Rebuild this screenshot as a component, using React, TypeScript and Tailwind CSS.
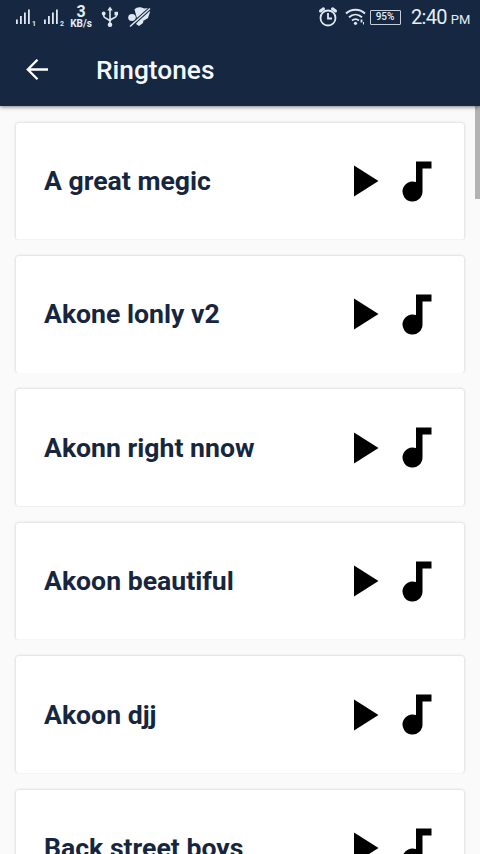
const tracks = [
  'A great megic',
  'Akone lonly v2',
  'Akonn right nnow',
  'Akoon beautiful',
  'Akoon djj',
  'Back street boys',
];

function Signal({ sim }: { sim: string }) {
  return (
    <svg width="24" height="20" viewBox="0 0 24 20" className="shrink-0" fill="#dfe7f1">
      <rect x="1" y="12.5" width="1.8" height="4.5" />
      <rect x="5" y="9" width="1.8" height="8" />
      <rect x="9" y="5.5" width="1.8" height="11.5" />
      <rect x="13" y="2.5" width="1.8" height="14.5" />
      <text x="17" y="18.500" fontFamily="Roboto, sans-serif" fontWeight="700" fontSize="7">{sim}</text>
    </svg>
  );
}

function StatusBar() {
  return (
    <div className="flex h-[34px] items-center pl-[15px] text-[#e6edf5]">
      <div className="flex w-[54px] items-center gap-1">
        <Signal sim="1" />
        <Signal sim="2" />
      </div>
      <div className="flex w-[24px] shrink-0 flex-col items-center">
        <span className="text-[16px] font-bold leading-[13px]">3</span>
        <span className="whitespace-nowrap text-[10px] font-bold leading-[11px]">KB/s</span>
      </div>
      <svg width="18" height="22" viewBox="0 0 18 22" className="ml-[8px] shrink-0" fill="none" stroke="#dfe7f1" strokeWidth="1.6">
        <path d="M9 4v14M2.700 8v2c0 2.500 6.300 3 6.300 5.500M15.300 8v2c0 2-6.300 2.700-6.300 5" />
        <path d="M9 .5l2.700 4H6.300z" fill="#dfe7f1" stroke="none" />
        <circle cx="9" cy="18.700" r="2.300" fill="#dfe7f1" stroke="none" />
        <circle cx="2.700" cy="7.500" r="1.900" fill="#dfe7f1" stroke="none" />
        <path d="M13.500 5.800h3.500v3.500h-3.500z" fill="#dfe7f1" stroke="none" />
      </svg>
      <svg width="24" height="22" viewBox="0 0 24 22" className="ml-[8px] shrink-0">
        <g fill="#dfe7f1">
          <path d="M7.500 3.500C10 0 15 1 17 2.500L22 2l1 4-2 6-4 2.500-7-2z" />
          <ellipse cx="5" cy="11.500" rx="3.800" ry="3.500" />
          <path d="M12 13l5-1-1 5-4 3-3-2z" />
        </g>
        <path d="M3 20.500L23 2.500" stroke="#152741" strokeWidth="3.600" />
        <path d="M3 20.500L23 2.500" stroke="#dfe7f1" strokeWidth="1.500" />
      </svg>
      <svg width="20" height="22" viewBox="0 0 20 22" className="ml-[167px] shrink-0" fill="none" stroke="#dfe7f1" strokeWidth="1.800">
        <circle cx="10" cy="12" r="7.500" />
        <path d="M10 7v5.500h4" />
        <path d="M2.500 5L5.500 2.800M14.500 2.800l3 2.200" strokeWidth="3" strokeLinecap="round" />
      </svg>
      <svg width="21" height="18" viewBox="0 0 21 18" className="ml-[7px] shrink-0" fill="none" stroke="#dfe7f1">
        <path d="M1 5.500C6.500.5 14.500.5 20 5.500" strokeWidth="2" />
        <path d="M4 9.200c4-3.500 9-3.500 13 0" strokeWidth="1.900" />
        <path d="M7 12.500c2.500-2 4.500-2 7 0" strokeWidth="1.800" />
        <circle cx="10.500" cy="15.300" r="1.600" fill="#dfe7f1" stroke="none" />
        <path d="M16.500 11.500v3" strokeWidth="1.800" />
        <path d="M18.500 14v2.500" strokeWidth="1" />
      </svg>
      <div className="ml-[4px] flex h-[15px] w-[31px] shrink-0 items-center justify-center rounded-[1px] border border-[#c4cfdb] pr-px text-[10px] font-medium leading-none">95%</div>
      <div className="ml-[10px] flex items-baseline gap-[4px] whitespace-nowrap leading-none">
        <span className="text-[20px] tracking-[-0.700px]">2:40</span>
        <span className="text-[13px]">PM</span>
      </div>
    </div>
  );
}

function TrackCard({ title }: { title: string }) {
  return (
    <div className="flex h-[117px] shrink-0 items-center rounded-[3px] bg-white pl-7 pr-8 shadow-[0_0_3px_rgba(0,0,0,0.22)] [clip-path:inset(-4px_-4px_0px_-4px)]">
      <span className="flex-1 whitespace-nowrap text-[26.600px] font-bold leading-[30px] tracking-[0.010px] text-[#17263f]">{title}</span>
      <svg width="25" height="32" viewBox="0 0 25 32" className="mr-[23px] shrink-0">
        <path d="M0 0.500v31L24.500 16z" />
      </svg>
      <svg width="30" height="41" viewBox="0 0 30 41" className="shrink-0">
        <path d="M14 0.500h15.500v7h-9V30.500a10 10 0 1 1-6.500-9.400z" />
      </svg>
    </div>
  );
}

export default function App() {
  return (
    <div className="flex h-[854px] w-[480px] flex-col overflow-hidden bg-[#fafafa] font-[Roboto,sans-serif]">
      <header className="relative z-10 h-[106px] shrink-0 bg-[#152741] shadow-[0_1px_4px_rgba(0,0,0,0.5)]">
        <StatusBar />
        <div className="flex h-[72px] items-center pl-[26px]">
          <svg width="23" height="22" viewBox="0 0 23 22" fill="none" stroke="#fff" strokeWidth="2.300">
            <path d="M22 10.500H2M11.500 .7L1.800 10.500l9.700 9.800" />
          </svg>
          <h1 className="ml-[47px] text-[26.300px] font-medium leading-[30px] text-[#f4f8fd]">Ringtones</h1>
        </div>
      </header>
      <main className="flex min-h-0 flex-1">
        <div className="flex w-[464px] flex-col gap-[16.400px] pl-4 pt-[16.600px]">
          {tracks.map((title) => <TrackCard key={title} title={title} />)}
        </div>
        <div className="ml-[11px] h-[93px] w-[5px] bg-[#b3b3b3]" />
      </main>
    </div>
  );
}
